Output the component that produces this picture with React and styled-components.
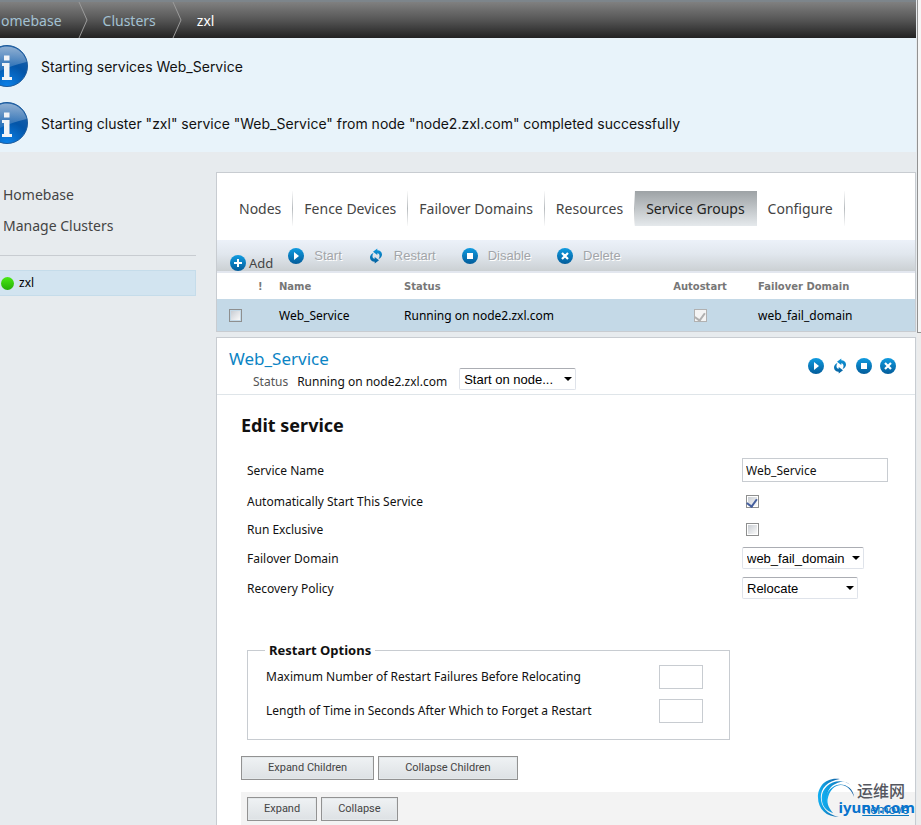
import React from 'react';
import styled, { createGlobalStyle, css } from 'styled-components';

const humanist = '"Noto Sans", "Open Sans", sans-serif';
const grotesque = '"Liberation Sans", Arial, sans-serif';
const line = '#c8ccd1';

const GlobalStyle = createGlobalStyle`
  * { box-sizing: border-box; }
  body { margin: 0; background: #e7ebee; color: #111; font: 12px/16px ${humanist}; }
  a { color: inherit; text-decoration: none; }
  button, input, select { font: inherit; color: inherit; margin: 0; }
  h1, h2, p, ul { margin: 0; padding: 0; }
`;

const Shell = styled.div`
  display: flex;
  height: 100vh;
  overflow: hidden;
`;
const Page = styled.div`
  flex: 1;
  min-width: 0;
  display: flex;
  flex-direction: column;
`;
const ScrollTrack = styled.div`
  flex: 0 0 5px;
  display: flex;
  flex-direction: column;
  background: #ececec;
  border-left: 1px solid #e7ebee;
`;
const ScrollThumb = styled.div`
  height: 333px;
  background: #f6f6f6;
  border-left: 1px solid #929292;
  border-bottom: 1px solid #929292;
`;

const Breadcrumbs = styled.nav`
  display: flex;
  flex: none;
  height: 38px;
  border-top: 2px solid #7d858b;
  background: linear-gradient(#808080, #555 50%, #222);
  color: #a3c1d2;
  font-size: 14px;
  line-height: 37px;
`;
const Crumb = styled.a`
  padding: 0 1px;
  ${(p) => p.$current && css`color: #fff;`}
`;
const Chevron = styled.svg`
  width: 11px;
  height: 36px;
  margin: 0 13px 0 15px;
  fill: none;
  stroke: #9b9b9b;
`;

const Messages = styled.section`
  flex: none;
  background: #e8f3fa;
`;
const Message = styled.p`
  display: flex;
  align-items: center;
  gap: 12px;
  height: 57px;
  font: 14px/20px Inter, ${humanist};
`;

const Body = styled.div`
  flex: 1;
  min-height: 0;
  display: flex;
  gap: 20px;
  padding-top: 20px;
`;
const Sidebar = styled.aside`
  flex: 0 0 196px;
  padding-top: 7px;
  color: #444;
  font-size: 14px;
`;
const SideLink = styled.a`
  display: block;
  padding-left: 3px;
  line-height: 31px;
`;
const SideRule = styled.hr`
  margin: 14px 0;
  border: 0;
  border-top: 1px solid ${line};
`;
const ClusterLink = styled.a`
  display: flex;
  align-items: center;
  gap: 5px;
  height: 26px;
  padding-left: 1px;
  border: 1px solid #c5dcea;
  border-left: 0;
  background: #d2e4f0;
  color: #000;
  font-size: 12px;
`;
const StatusDot = styled.span`
  width: 13px;
  height: 13px;
  border-radius: 50%;
  background: linear-gradient(#49ea13, #25ae08);
`;

const Main = styled.main`
  flex: 1;
  min-width: 0;
  display: flex;
  flex-direction: column;
  gap: 5px;
`;
const Panel = styled.section`
  display: flex;
  flex-direction: column;
  border: 1px solid ${line};
  background: #fff;
  ${(p) => p.$grow && css`flex: 1; border-bottom: 0;`}
`;
const Tabs = styled.nav`
  display: flex;
  padding: 18px 11px 14px;
`;
const Tab = styled.a`
  padding: 0 11px;
  border-right: 1px solid;
  border-image: linear-gradient(#fff, #b7bbbe 50%, #fff) 1;
  color: #444;
  font-size: 14px;
  line-height: 35px;
  white-space: nowrap;
  ${(p) => p.$active && css`
    border-image: none;
    border-color: transparent;
    background: linear-gradient(#9da2a5, #e5e9ec) border-box;
    color: #222;
  `}
`;
const Toolbar = styled.div`
  display: flex;
  gap: 15px;
  height: 33px;
  padding-left: 13px;
  border-bottom: 2px solid #e3e7ef;
  background: linear-gradient(#ecf1f9, #e1e7ee 45%, #cbd0d3);
`;
const ToolButton = styled.button`
  display: flex;
  align-items: center;
  gap: 10px;
  height: 32px;
  padding: 0;
  border: 0;
  background: none;
  color: #a2a5a9;
  font: 13px/16px ${grotesque};
  text-shadow: 1px 1px #fff;
  ${(p) => p.$add && css`
    align-self: flex-end;
    gap: 3px;
    height: 16px;
    color: #444;
    font: 13px/16px ${humanist};
    text-shadow: none;
  `}
`;
const ToolGroup = styled.div`
  display: flex;
  gap: 26px;
`;

const ServiceTable = styled.table`
  width: 100%;
  table-layout: fixed;
  border-collapse: collapse;
  text-align: left;
  th { height: 26px; padding: 1px 0 0; color: #777; font: bold 10px/14px "DejaVu Sans", sans-serif; }
  td { height: 32px; padding: 2px 0 0; background: #c4d9e7; color: #000; }
  .check { width: 41px; padding: 0 0 0 12px; }
  .alert { width: 21px; }
  .name { width: 125px; }
  .auto { width: 101px; padding-right: 15px; text-align: center; }
  td.auto { padding-top: 0; }
  .domain { width: 157px; }
`;
const CheckBox = styled.input`
  appearance: none;
  display: grid;
  justify-content: center;
  width: 13px;
  height: 13px;
  margin: 0 auto 0 ${(p) => p.$inset || 0}px;
  ${(p) => p.$center && css`margin: 0 auto;`}
  border: 1px solid ${(p) => (p.disabled ? '#b1b1b1' : '#8e8f8f')};
  background: linear-gradient(135deg, #c9cdd3, #fafafa) content-box;
  background-color: #f4f4f4;
  padding: 1px;
  ${(p) => p.disabled && css`background: #f4f4f4;`}
  &:checked::after {
    content: '';
    width: 5px;
    height: 8px;
    border: solid ${(p) => (p.disabled ? '#b0b0b0' : '#455f9e')};
    border-width: 0 2px 2px 0;
    transform: rotate(36deg);
    transform-origin: 50% 40%;
  }
`;

const DetailHeader = styled.header`
  display: flex;
  justify-content: space-between;
  height: 57px;
  padding: 10px 19px 0 12px;
  border-bottom: 1px solid #dfe5e9;
`;
const DetailTitle = styled.h1`
  color: #0b84c4;
  font-size: 17px;
  font-weight: 400;
  line-height: 22px;
`;
const StatusLine = styled.div`
  display: flex;
  align-items: flex-end;
  height: 20px;
  padding-left: 24px;
  gap: 9px;
`;
const StatusLabel = styled.label`
  color: #555;
`;
const DetailActions = styled.div`
  display: flex;
  gap: 8px;
  padding-top: 10px;
`;
const IconButton = styled.button`
  display: flex;
  height: 16px;
  padding: 0;
  border: 0;
  background: none;
`;

const SelectBox = styled.span`
  display: inline-grid;
  align-items: center;
  width: ${(p) => p.$width}px;
  margin-left: ${(p) => p.$gap || 0}px;
  > * { grid-area: 1 / 1; }
  > svg { justify-self: end; margin-right: 4px; pointer-events: none; }
`;
const Select = styled.select`
  appearance: none;
  width: 100%;
  height: 22px;
  padding: 1px 16px 0 4px;
  border: 1px solid #dfe3ea;
  border-top-color: #abadb3;
  border-radius: 2px;
  background: #fff;
  color: #000;
  font: 13px/18px ${grotesque};
`;

const Heading = styled.h2`
  padding: 17px 0 0 24px;
  font-size: 18px;
  line-height: 26px;
`;
const Form = styled.form`
  display: grid;
  grid-template-columns: minmax(0, 1fr) 173px;
  grid-template-rows: 34px 28px 28px 30px 30px;
  align-items: center;
  padding: 15px 0 0 30px;
  label { padding-top: 2px; }
`;
const TextInput = styled.input`
  width: ${(p) => p.$width}px;
  height: 24px;
  padding: 0 3px;
  border: 1px solid ${line};
  background: #fff;
`;
const RestartOptions = styled.fieldset`
  width: 483px;
  margin: 39px 0 0 30px;
  padding: 2px 26px 11px 18px;
  border: 1px solid ${line};
  legend { margin-left: -1px; padding: 0 4px; font-size: 13px; line-height: 16px; font-weight: 700; }
`;
const OptionRow = styled.div`
  display: flex;
  align-items: center;
  justify-content: space-between;
  height: 34px;
`;
const ButtonRow = styled.div`
  display: flex;
  gap: 4px;
  padding: 16px 0 12px 24px;
`;
const Button = styled.button`
  height: 24px;
  padding: 0 ${(p) => p.$pad}px;
  border: 1px solid #929292;
  background: linear-gradient(#eff2f4, #dde1e4);
  box-shadow: inset 0 0 0 1px #e4e8ea;
  color: #444;
  font: 11px/14px Roboto, ${grotesque};
`;
const ResourceBar = styled.div`
  position: relative;
  flex: 1;
  display: flex;
  align-items: flex-start;
  gap: 4px;
  margin-left: 24px;
  padding: 5px 6px 0;
  background: #f3f3f3;
`;
const RemoveLink = styled.a`
  margin: 5px 0 0 auto;
  color: #0b78c0;
  font: 13px/16px Roboto, ${grotesque};
  text-decoration: underline;
`;
const Watermark = styled.div`
  position: absolute;
  top: -14px;
  right: 0;
  display: flex;
  pointer-events: none;
`;
const WatermarkText = styled.div`
  margin-left: -16px;
  padding-top: 4px;
  text-align: right;
  span { display: block; padding-right: 10px; color: #55575f; font: 500 16px/16px "Noto Sans CJK SC", sans-serif; }
  b { display: block; color: #0873cd; font: bold 15px/18px ${humanist}; }
`;

const ActionSvg = styled.svg`
  display: block;
  width: 16px;
  height: 16px;
`;

function ActionIcon({ kind }) {
  return (
    <ActionSvg viewBox="0 0 16 16" aria-hidden="true">
      <defs>
        <linearGradient id="actionBlue" gradientUnits="userSpaceOnUse" x1="0" y1="0" x2="0" y2="16">
          <stop offset="0" stopColor="#109be0" />
          <stop offset="1" stopColor="#035c9a" />
        </linearGradient>
      </defs>
      {kind !== 'restart' && <circle cx="8" cy="8" r="8" fill="url(#actionBlue)" />}
      {kind === 'add' && <path d="M8 4v8M4 8h8" stroke="#fff" strokeWidth="2" />}
      {kind === 'start' && <path d="M6 4v8l5-4z" fill="#fff" />}
      {kind === 'disable' && <path d="M5 5h6v6H5z" fill="#fff" />}
      {kind === 'delete' && <path d="M5 5l6 6M11 5l-6 6" stroke="#fff" strokeWidth="2.2" />}
      {kind === 'restart' && (
        <g fill="url(#actionBlue)">
          <path d="M9.300 .6L5 3.800L9.300 7V5.200C10.800 5.400 11.600 6.500 11.500 8C11.500 9.200 11.200 10 10.500 11C13 10 14 8.300 14 6.500C14 4 12 2.300 9.300 2.200z" />
          <path d="M6.700 15.400L11 12.200L6.700 9V10.800C5.200 10.600 4.400 9.500 4.500 8C4.500 6.800 4.800 6 5.500 5C3 6 2 7.700 2 9.500C2 12 4 13.700 6.700 13.800z" />
        </g>
      )}
    </ActionSvg>
  );
}

const InfoSvg = styled.svg`
  flex: none;
  width: 29px;
  height: 44px;
`;
function InfoIcon() {
  return (
    <InfoSvg viewBox="0 1 29 44" aria-hidden="true">
      <defs>
        <radialGradient id="infoBlue" cx=".5" cy="1" r=".9">
          <stop offset="0" stopColor="#0b82ea" />
          <stop offset=".6" stopColor="#0455a8" />
          <stop offset="1" stopColor="#1c5fa7" />
        </radialGradient>
        <linearGradient id="infoGloss" x1="0" y1="0" x2="0" y2="1">
          <stop offset="0" stopColor="#fff" stopOpacity=".5" />
          <stop offset="1" stopColor="#fff" stopOpacity=".12" />
        </linearGradient>
      </defs>
      <circle cx="7" cy="22" r="20.500" fill="url(#infoBlue)" stroke="#1b5a9c" />
      <path d="M-13 22A20 20 0 0 1 26.500 18Q10 22 0 27Z" fill="url(#infoGloss)" />
      <path d="M4 11.500h5.500v5H4zM2 19h7.500v14h2.500v3H2v-3h2V22H2z" fill="#f2f4f7" />
    </InfoSvg>
  );
}

function SelectField({ width, gap, id, value, label }) {
  return (
    <SelectBox $width={width} $gap={gap}>
      <Select id={id} defaultValue={value} aria-label={label}>
        <option>{value}</option>
      </Select>
      <svg width="8" height="4" viewBox="0 0 8 4" aria-hidden="true"><path d="M0 0h8L4 4z" /></svg>
    </SelectBox>
  );
}

const LogoSvg = styled.svg`
  width: 38px;
  height: 40px;
`;
function WatermarkLogo() {
  return (
    <LogoSvg viewBox="0 0 40 42" aria-hidden="true">
      <defs>
        <linearGradient id="swirl" x1="0" x2="1">
          <stop offset="0" stopColor="#12b0f2" />
          <stop offset="1" stopColor="#105b9f" />
        </linearGradient>
      </defs>
      <g fill="url(#swirl)">
        <path d="M24 1C8-1 1 10 1 20C1 33 10 41 23 41C10 38 4 30 4 20C4 11 11 3 24 1z" />
        <path d="M35 7C22-2 5 7 5 21C5 29 9 34 17 37C8 28 7 10 22 5C27 3 31 4 35 7z" />
        <path d="M39 20C38 8 24 3 16 10C9 15 8 22 11 29C10 20 14 11 21 8C29 5 36 11 39 20z" />
      </g>
    </LogoSvg>
  );
}

const tabs = ['Nodes', 'Fence Devices', 'Failover Domains', 'Resources', 'Service Groups', 'Configure'];
const tools = [['start', 'Start'], ['restart', 'Restart'], ['disable', 'Disable'], ['delete', 'Delete']];
const messages = [
  'Starting services Web_Service',
  'Starting cluster "zxl" service "Web_Service" from node "node2.zxl.com" completed successfully',
];

export default function App() {
  return (
    <>
      <GlobalStyle />
      <Shell>
        <Page>
          <Breadcrumbs aria-label="Breadcrumb">
            <Crumb href="#home">omebase</Crumb>
            <Chevron viewBox="0 0 11 36"><path d="M1 0l8 18-8 18" /></Chevron>
            <Crumb href="#clusters">Clusters</Crumb>
            <Chevron viewBox="0 0 11 36"><path d="M1 0l8 18-8 18" /></Chevron>
            <Crumb href="#zxl" $current>zxl</Crumb>
          </Breadcrumbs>
          <Messages>
            {messages.map((m) => <Message key={m}><InfoIcon />{m}</Message>)}
          </Messages>
          <Body>
            <Sidebar>
              <SideLink href="#home">Homebase</SideLink>
              <SideLink href="#manage">Manage Clusters</SideLink>
              <SideRule />
              <ClusterLink href="#zxl"><StatusDot />zxl</ClusterLink>
            </Sidebar>
            <Main>
              <Panel>
                <Tabs>
                  {tabs.map((t) => <Tab key={t} href="#tab" $active={t === 'Service Groups'}>{t}</Tab>)}
                </Tabs>
                <Toolbar>
                  <ToolButton type="button" $add><ActionIcon kind="add" />Add</ToolButton>
                  <ToolGroup>
                    {tools.map(([kind, label]) => (
                      <ToolButton type="button" key={kind}><ActionIcon kind={kind} />{label}</ToolButton>
                    ))}
                  </ToolGroup>
                </Toolbar>
                <ServiceTable>
                  <thead>
                    <tr>
                      <th className="check" aria-label="Select" />
                      <th className="alert">!</th>
                      <th className="name">Name</th>
                      <th>Status</th>
                      <th className="auto">Autostart</th>
                      <th className="domain">Failover Domain</th>
                    </tr>
                  </thead>
                  <tbody>
                    <tr>
                      <td className="check"><CheckBox type="checkbox" aria-label="Select Web_Service" /></td>
                      <td />
                      <td>Web_Service</td>
                      <td>Running on node2.zxl.com</td>
                      <td className="auto"><CheckBox type="checkbox" $center defaultChecked disabled aria-label="Autostart" /></td>
                      <td>web_fail_domain</td>
                    </tr>
                  </tbody>
                </ServiceTable>
              </Panel>
              <Panel $grow>
                <DetailHeader>
                  <div>
                    <DetailTitle>Web_Service</DetailTitle>
                    <StatusLine>
                      <StatusLabel htmlFor="node">Status</StatusLabel>
                      <span>Running on node2.zxl.com</span>
                      <SelectField id="node" width={117} gap={3} value="Start on node..." label="Start on node" />
                    </StatusLine>
                  </div>
                  <DetailActions>
                    {tools.map(([kind, label]) => (
                      <IconButton type="button" key={kind} aria-label={label}><ActionIcon kind={kind} /></IconButton>
                    ))}
                  </DetailActions>
                </DetailHeader>
                <Heading>Edit service</Heading>
                <Form>
                  <label htmlFor="name">Service Name</label>
                  <TextInput id="name" $width={146} defaultValue="Web_Service" />
                  <label htmlFor="auto">Automatically Start This Service</label>
                  <CheckBox id="auto" type="checkbox" $inset={4} defaultChecked />
                  <label htmlFor="exclusive">Run Exclusive</label>
                  <CheckBox id="exclusive" type="checkbox" $inset={4} />
                  <label htmlFor="domain">Failover Domain</label>
                  <SelectField id="domain" width={122} value="web_fail_domain" />
                  <label htmlFor="policy">Recovery Policy</label>
                  <SelectField id="policy" width={116} value="Relocate" />
                </Form>
                <RestartOptions>
                  <legend>Restart Options</legend>
                  <OptionRow>
                    <label htmlFor="max">Maximum Number of Restart Failures Before Relocating</label>
                    <TextInput id="max" $width={44} />
                  </OptionRow>
                  <OptionRow>
                    <label htmlFor="forget">Length of Time in Seconds After Which to Forget a Restart</label>
                    <TextInput id="forget" $width={44} />
                  </OptionRow>
                </RestartOptions>
                <ButtonRow>
                  <Button type="button" $pad={26}>Expand Children</Button>
                  <Button type="button" $pad={26}>Collapse Children</Button>
                </ButtonRow>
                <ResourceBar>
                  <Button type="button" $pad={16}>Expand</Button>
                  <Button type="button" $pad={16}>Collapse</Button>
                  <RemoveLink href="#remove">Remove</RemoveLink>
                  <Watermark>
                    <WatermarkLogo />
                    <WatermarkText><span>运维网</span><b>iyunv.com</b></WatermarkText>
                  </Watermark>
                </ResourceBar>
              </Panel>
            </Main>
          </Body>
        </Page>
        <ScrollTrack><ScrollThumb /></ScrollTrack>
      </Shell>
    </>
  );
}
